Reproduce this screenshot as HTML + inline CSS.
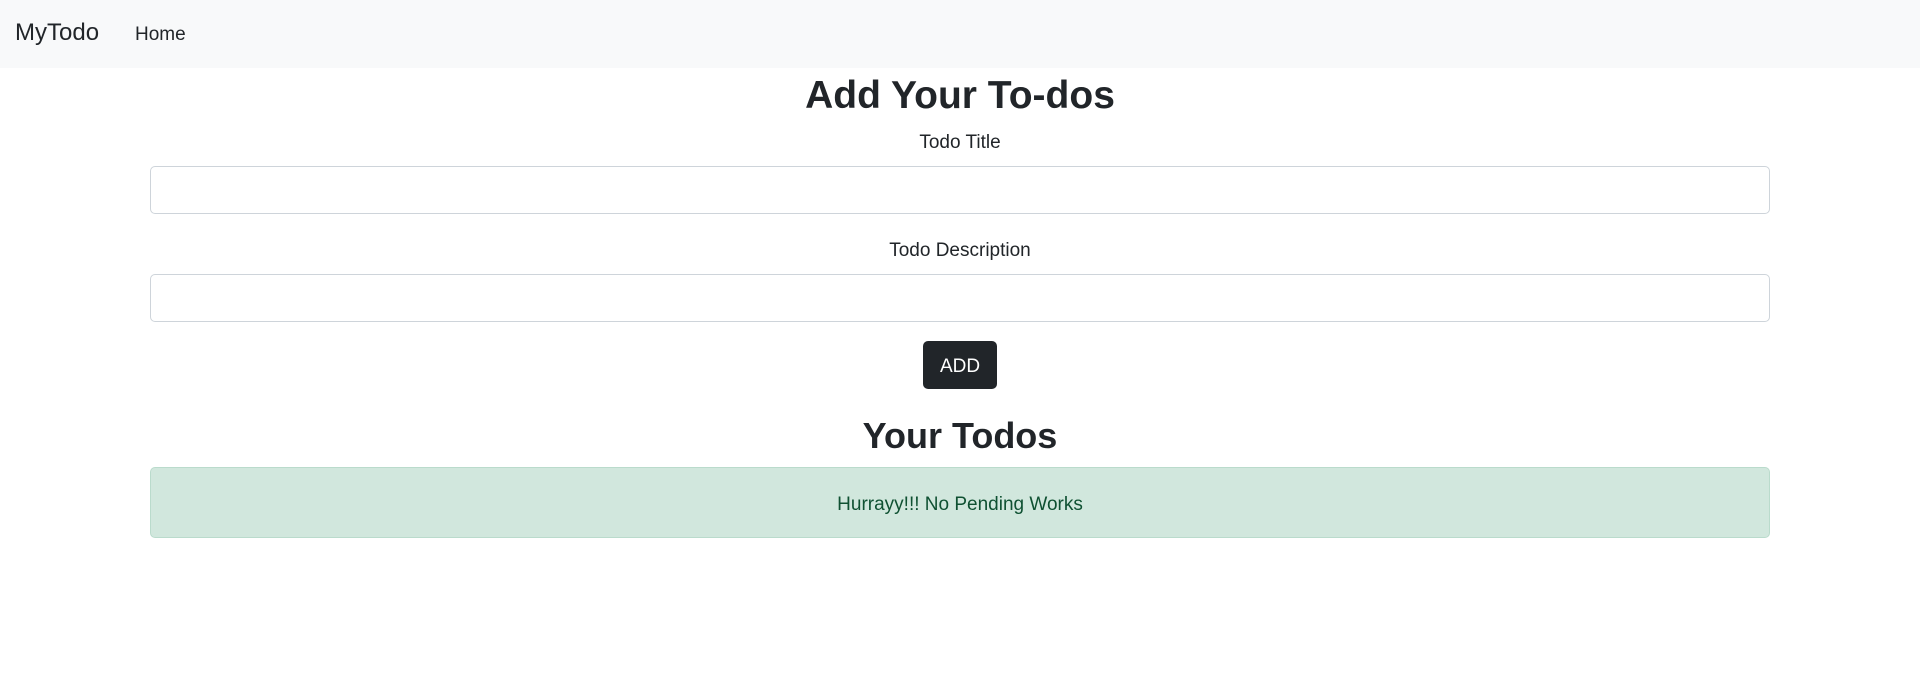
<!DOCTYPE html>
<html><head><style>
body{margin:0;width:1920px;height:692px;background:#fff;font-family:"Liberation Sans",sans-serif;color:#212529;position:relative;overflow:hidden}
.nav{position:absolute;left:0;top:0;width:1920px;height:68px;background:#f8f9fa}
.brand{position:absolute;left:15px;top:19px;font-size:24px}
.home{position:absolute;left:135px;top:24px;font-size:19px}
.c{position:absolute;left:0;width:1920px;text-align:center}
.inp{position:absolute;left:150px;width:1618px;border:1px solid #ced4da;border-radius:5px;background:#fff}
.btn{position:absolute;left:923px;top:341px;width:74px;height:48px;background:#212529;border-radius:5px;color:#fff;font-size:19px;line-height:51px;text-align:center}
.alert{position:absolute;left:150px;top:467px;width:1618px;height:69px;background:#d1e7dd;border:1px solid #badbcc;border-radius:5px;color:#0f5132;font-size:19px;line-height:73px;text-align:center}
</style></head><body>
<div class="nav"><div class="brand">MyTodo</div><div class="home">Home</div></div>
<div class="c" style="top:71px;font-size:39px;font-weight:bold;line-height:50px">Add Your To-dos</div>
<div class="c" style="top:132px;font-size:19px">Todo Title</div>
<div class="inp" style="top:166px;height:46px"></div>
<div class="c" style="top:240px;font-size:19px">Todo Description</div>
<div class="inp" style="top:274px;height:46px"></div>
<div class="btn">ADD</div>
<div class="c" style="top:411px;font-size:36px;font-weight:bold;line-height:50px">Your Todos</div>
<div class="alert">Hurrayy!!! No Pending Works</div>
</body></html>
